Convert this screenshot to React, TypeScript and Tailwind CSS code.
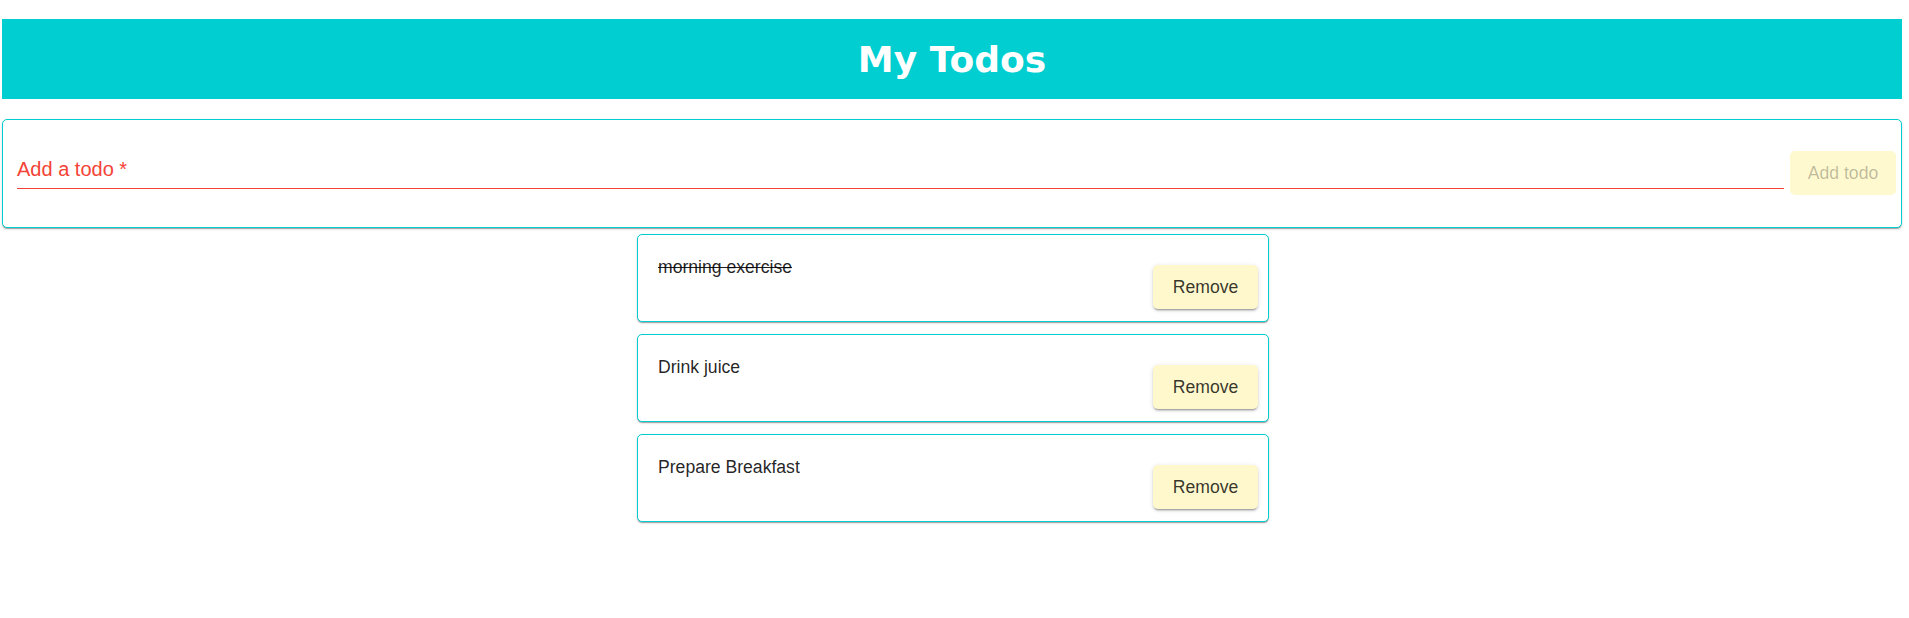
import React from 'react';

const todos = [
  { id: 1, text: 'morning exercise', done: true },
  { id: 2, text: 'Drink juice', done: false },
  { id: 3, text: 'Prepare Breakfast', done: false },
];

export default function App() {
  return (
    <div className="min-h-screen bg-white font-['Liberation_Sans',Arial,sans-serif] text-[17.6px]">
      {/* Header */}
      <div className="mx-[2px] mt-[19px] h-[80px] w-[1900px] bg-[#00ced1] flex items-center justify-center">
        <h1 className="text-white font-bold text-[36px] leading-none font-['Comic_Sans_MS','DejaVu_Sans',sans-serif] pt-[2px]">
          My Todos
        </h1>
      </div>

      {/* Add todo card */}
      <div className="mx-[2px] mt-[20px] w-[1900px] h-[109px] border border-[#00ced1] rounded-[5px] bg-white shadow-[0px_2px_1px_-1px_rgba(0,0,0,0.2),0px_1px_1px_0px_rgba(0,0,0,0.14),0px_1px_3px_0px_rgba(0,0,0,0.12)] flex items-start pt-[31px] pl-[14px] pr-[5px]">
        <div className="flex-1 h-[38px] border-b border-[#f44336] pt-[7px] mr-[6px]">
          <span className="block text-[20px] leading-[22px] text-[#f44336]">Add a todo *</span>
        </div>
        <button
          disabled
          className="w-[106px] h-[44px] rounded-[5px] bg-[#fef9cf] text-[rgba(0,0,0,0.26)] leading-[20px]"
        >
          Add todo
        </button>
      </div>

      {/* Todo list */}
      <div className="ml-[3px] w-[1900px] mt-[6px]">
        <div className="w-[632px] mx-auto flex flex-col gap-[12px]">
          {todos.map((todo) => (
            <div
              key={todo.id}
              className="h-[88px] border border-[#00ced1] rounded-[5px] bg-white shadow-[0px_2px_1px_-1px_rgba(0,0,0,0.2),0px_1px_1px_0px_rgba(0,0,0,0.14),0px_1px_3px_0px_rgba(0,0,0,0.12)] flex justify-between"
            >
              <div
                className={`pl-[20px] pt-[22px] leading-[20px] text-[rgba(0,0,0,0.87)] ${
                  todo.done ? 'line-through' : ''
                }`}
              >
                {todo.text}
              </div>
              <button className="self-end mb-[12px] mr-[10px] w-[105px] h-[44px] rounded-[5px] bg-[#fff8cc] text-[rgba(0,0,0,0.8)] leading-[20px] shadow-[0px_3px_1px_-2px_rgba(0,0,0,0.2),0px_2px_2px_0px_rgba(0,0,0,0.14),0px_1px_5px_0px_rgba(0,0,0,0.12)]">
                Remove
              </button>
            </div>
          ))}
        </div>
      </div>
    </div>
  );
}
